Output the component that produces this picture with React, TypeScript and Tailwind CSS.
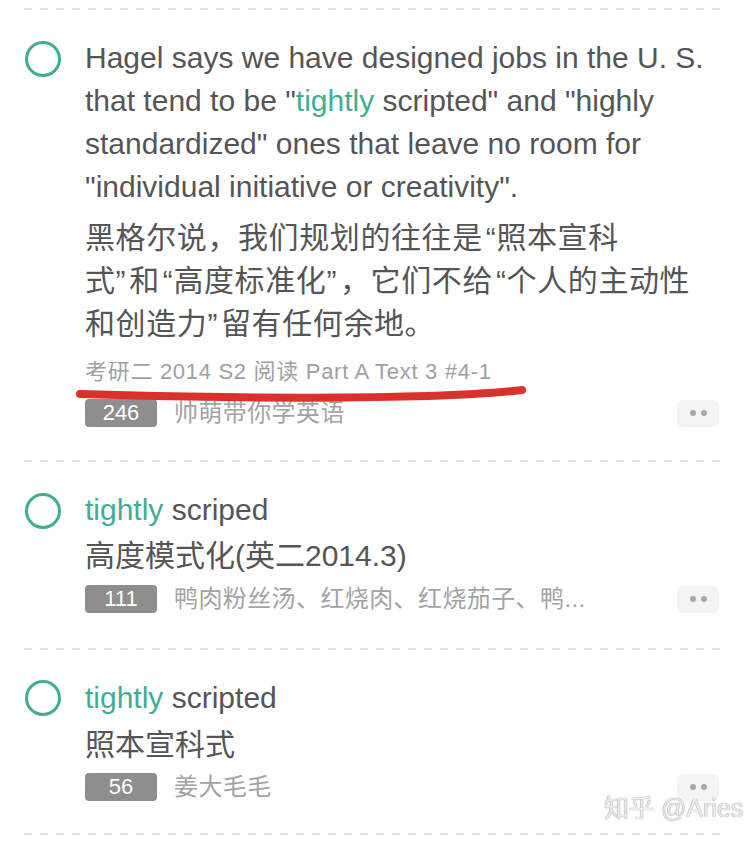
const font = "font-['Liberation_Sans','Noto_Sans_CJK_SC',sans-serif]";

const Divider = () => (
    <div className="ml-[24px] w-[700px] h-[2px] bg-[linear-gradient(to_right,#e3e3e3_8px,transparent_8px)] bg-[length:16px_2px]" />
);

const Ring = ({ top }: { top: string }) => (
    <div className={`ml-[25px] w-[36px] h-[36px] shrink-0 rounded-full border-[3px] border-[#3fae92] ${top}`} />
);

const MoreBtn = () => (
    <div className="ml-auto w-[42px] h-[27px] rounded-[6px] bg-[#f4f4f4] flex items-center justify-center gap-[5px]">
        <span className="w-[6px] h-[6px] rounded-full bg-[#a8a8a8]" />
        <span className="w-[6px] h-[6px] rounded-full bg-[#a8a8a8]" />
    </div>
);

const Meta = ({ count, name }: { count: string; name: string }) => (
    <div className="flex items-center">
        <div className="w-[72px] h-[28px] rounded-[4px] bg-[#8e8e8e] text-white text-[22px] leading-[28px] text-center">{count}</div>
        <p className="ml-[17px] text-[24px] leading-[28px] tracking-[0.4px] text-[#a3a3a3] whitespace-nowrap">{name}</p>
        <MoreBtn />
    </div>
);

const Teal = ({ children }: { children: React.ReactNode }) => <span className="text-[#3fae92]">{children}</span>;

// opening / closing curly quotes, a bit wider than the latin glyphs
const Lq = () => <span className="ml-[3px]">“</span>;
const Rq = () => <span className="mr-[3px]">”</span>;

export default function App() {
    return (
        <div className={`relative w-[748px] h-[841px] bg-white overflow-hidden text-[#555] ${font}`}>
            <div className="h-[8px]" />
            <Divider />

            {/* item 1 */}
            <div className="flex pt-[26px] pb-[33px] pr-[29px]">
                <Ring top="mt-[5px]" />
                <div className="ml-[24px] flex-1 flex flex-col">
                    <p className="text-[30px] leading-[43px] whitespace-nowrap">
                        Hagel says we have designed jobs in the U. S.<br />
                        that tend to be "<Teal>tightly</Teal> scripted" and "highly<br />
                        standardized" ones that leave no room for<br />
                        "individual initiative or creativity".
                    </p>
                    <p className="mt-[8px] text-[30px] leading-[43px] tracking-[0.6px] whitespace-nowrap">
                        黑格尔说，我们规划的往往是<Lq />照本宣科<br />
                        式<Rq />和<Lq />高度标准化<Rq />，它们不给<Lq />个人的主动性<br />
                        和创造力<Rq />留有任何余地。
                    </p>
                    <p className="mt-[13px] text-[22px] leading-[28px] tracking-[0.7px] text-[#a0a0a0] whitespace-nowrap">考研二 2014 S2 阅读 Part A Text 3 #4-1</p>
                    <div className="mt-[13px]">
                        <Meta count="246" name="帅萌带你学英语" />
                    </div>
                </div>
            </div>
            <Divider />

            {/* item 2 */}
            <div className="flex pt-[26px] pb-[35px] pr-[29px]">
                <Ring top="mt-[5px]" />
                <div className="ml-[24px] flex-1 flex flex-col">
                    <p className="text-[30px] leading-[43px]"><Teal>tightly</Teal> scriped</p>
                    <p className="mt-[3px] text-[30px] leading-[43px]">高度模式化(英二2014.3)</p>
                    <div className="mt-[8px]">
                        <Meta count="111" name="鸭肉粉丝汤、红烧肉、红烧茄子、鸭..." />
                    </div>
                </div>
            </div>
            <Divider />

            {/* item 3 */}
            <div className="flex pt-[26px] pb-[32px] pr-[29px]">
                <Ring top="mt-[4px]" />
                <div className="ml-[24px] flex-1 flex flex-col">
                    <p className="text-[30px] leading-[43px]"><Teal>tightly</Teal> scripted</p>
                    <p className="mt-[4px] text-[30px] leading-[43px]">照本宣科式</p>
                    <div className="mt-[7px]">
                        <Meta count="56" name="姜大毛毛" />
                    </div>
                </div>
            </div>
            <Divider />

            {/* red pen mark */}
            <svg className="absolute left-0 top-0 pointer-events-none" width="748" height="841">
                <path d="M80 394 C 200 398, 430 401, 522 390" fill="none" stroke="#d8322b" strokeWidth="8" strokeLinecap="round" />
            </svg>

            {/* watermark */}
            <p className="absolute left-[604px] top-[792px] text-[25px] leading-[32px] text-[#ececec] [text-shadow:0_0_1px_rgba(0,0,0,0.6)] whitespace-nowrap">知乎 @Aries</p>
        </div>
    );
}
